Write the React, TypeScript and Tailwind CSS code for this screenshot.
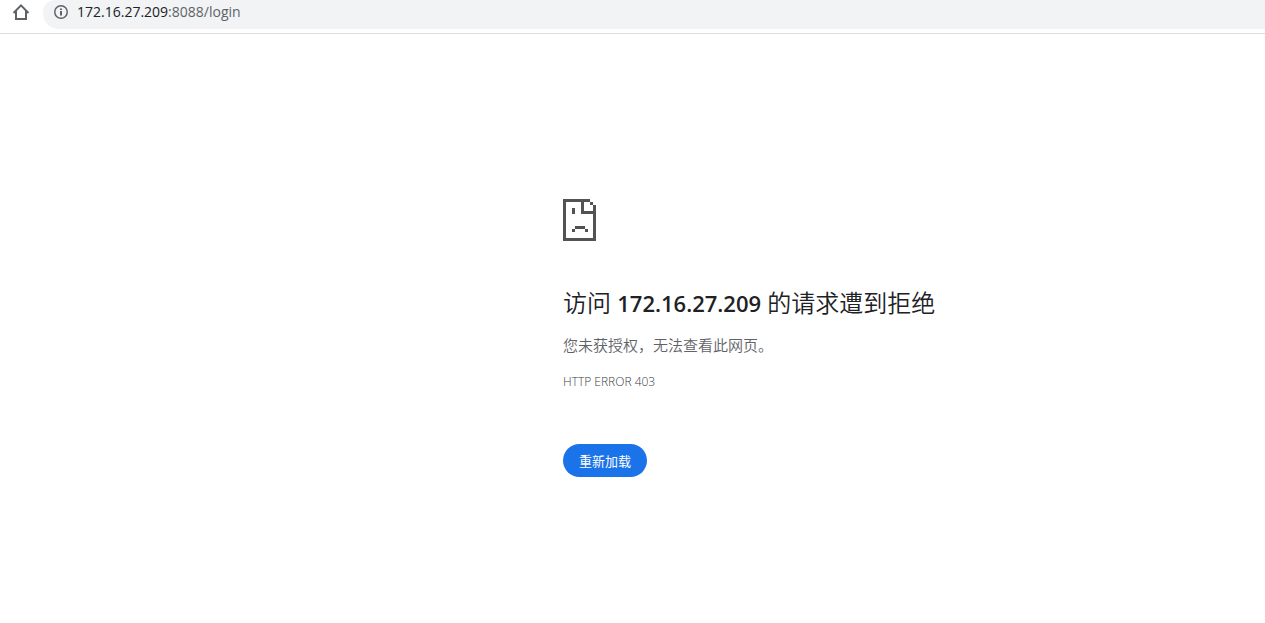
import { useState } from 'react';

function HomeIcon() {
    return (
        <svg width="18" height="18" viewBox="0 0 18 18" fill="none" stroke="#5f6368" strokeWidth="2" aria-hidden="true">
            <path d="M1.5 10 9 2.4 16.5 10" />
            <path d="M4 8v8h10V8" />
        </svg>
    );
}

function InfoIcon() {
    return (
        <svg width="16" height="16" viewBox="0 0 16 16" fill="none" aria-hidden="true">
            <circle cx="8" cy="8" r="6.25" stroke="#5f6368" strokeWidth="1.5" />
            <path fill="#5f6368" d="M7 7h2v4.5H7zM7 4.5h2V6H7z" />
        </svg>
    );
}

function SadPageIcon() {
    return (
        <svg width="33" height="42" viewBox="0 0 33 42" fill="#535353" shapeRendering="crispEdges" aria-hidden="true">
            {/* page outline and folded corner */}
            <path d="M0 0h27v3h-6v9h9V6h3v36H0zM3 3v36h27V15H18V3z" fillRule="evenodd" />
            <path d="M27 3h3v3h-3z" />
            {/* face */}
            <path d="M9 9h3v6H9zM12 27h10v3H12zM9 30h3v3H9zM22 30h3v3h-3z" />
        </svg>
    );
}

export default function App() {
    const [url, setUrl] = useState({ host: '172.16.27.209', rest: ':8088/login' });

    const handleReload = () => {
        setUrl({ ...url });
    };

    return (
        <div className="min-h-screen bg-white font-['Open_Sans','Noto_Sans_CJK_SC',sans-serif]">
            {/* Toolbar */}
            <header className="flex items-start border-b border-[#dadce0] pb-1 pl-3">
                <button type="button" aria-label="主页" className="mt-[3px] shrink-0">
                    <HomeIcon />
                </button>
                <div className="ml-[13px] flex h-[29px] flex-1 items-start rounded-tl-xl rounded-bl-2xl bg-[#f1f3f4] pl-[10px]">
                    <button type="button" aria-label="网站信息" className="mt-1 shrink-0">
                        <InfoIcon />
                    </button>
                    <a href="#login" className="ml-2 mt-0.5 text-sm text-[#5f6368]">
                        <span className="text-[#202124]">{url.host}</span>
                        {url.rest}
                    </a>
                </div>
            </header>

            {/* Error message */}
            <main className="flex justify-center px-6 pt-[165px] lg:pl-[461px] lg:pr-0">
                <div className="w-full max-w-[600px]">
                    <SadPageIcon />
                    <h1 className="mt-[46px] text-2xl font-[350] text-[#202124]">
                        访问 <span className="text-[22px] font-semibold">{url.host}</span> 的请求遭到拒绝
                    </h1>
                    <p className="mt-[14px] text-[15px] leading-6 font-[350] text-[#5f6368]">您未获授权，无法查看此网页。</p>
                    <p className="mt-[13px] text-xs leading-6 font-light text-[#3c4043]">HTTP ERROR 403</p>
                    <button
                        type="button"
                        onClick={handleReload}
                        className="mt-[50px] h-[33px] rounded-full bg-[#1a73e8] px-4 pt-0.5 text-[13px] text-white"
                    >
                        重新加载
                    </button>
                </div>
            </main>
        </div>
    );
}
